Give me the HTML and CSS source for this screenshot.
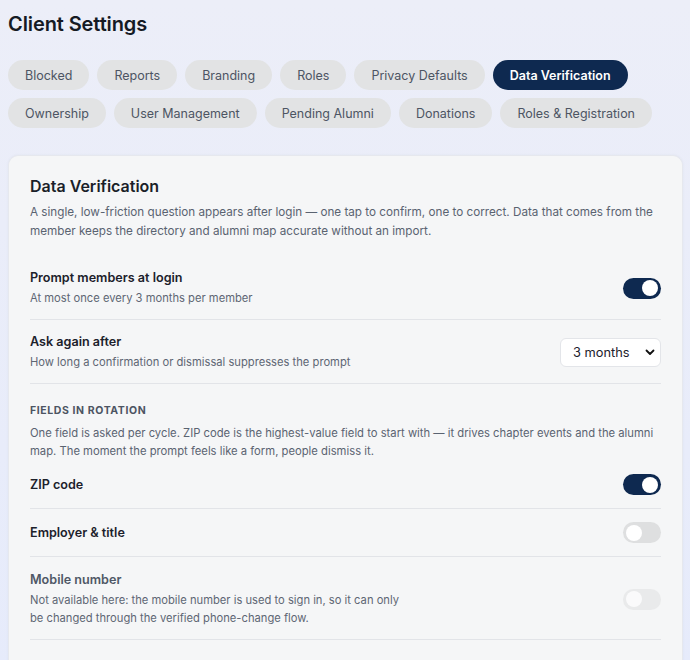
FILE: index.html
```html
<!DOCTYPE html>
<html lang="en">
<head>
<meta charset="utf-8">
<title>Client Settings</title>
<link rel="stylesheet" href="styles.css">
</head>
<body>
<div class="page">
  <h1 class="page-title">Client Settings</h1>
  <nav class="tabs">
    <span class="tab">Blocked</span>
    <span class="tab">Reports</span>
    <span class="tab">Branding</span>
    <span class="tab">Roles</span>
    <span class="tab">Privacy Defaults</span>
    <span class="tab active">Data Verification</span>
    <span class="tab">Ownership</span>
    <span class="tab">User Management</span>
    <span class="tab">Pending Alumni</span>
    <span class="tab">Donations</span>
    <span class="tab">Roles &amp; Registration</span>
  </nav>

  <section class="card">
    <h2 class="card-title">Data Verification</h2>
    <p class="card-desc">A single, low-friction question appears after login — one tap to confirm, one to correct. Data that comes from the member keeps the directory and alumni map accurate without an import.</p>

    <div class="rows">
      <div class="row">
        <div class="row-text">
          <div class="row-label">Prompt members at login</div>
          <div class="row-sub">At most once every 3 months per member</div>
        </div>
        <span class="toggle on"><span class="knob"></span></span>
      </div>
      <div class="row">
        <div class="row-text">
          <div class="row-label">Ask again after</div>
          <div class="row-sub">How long a confirmation or dismissal suppresses the prompt</div>
        </div>
        <div class="select">
          <span>3 months</span>
          <svg class="chev" width="10" height="7" viewBox="0 0 10 7"><path d="M1.5 1.5 L5 5 L8.5 1.5" fill="none" stroke="#111" stroke-width="1.8" stroke-linecap="round" stroke-linejoin="round"/></svg>
        </div>
      </div>
    </div>

    <div class="section">
      <div class="section-title">FIELDS IN ROTATION</div>
      <p class="section-desc">One field is asked per cycle. ZIP code is the highest-value field to start with — it drives chapter events and the alumni map. The moment the prompt feels like a form, people dismiss it.</p>
    </div>

    <div class="rows fields">
      <div class="row compact">
        <div class="row-text">
          <div class="row-label">ZIP code</div>
        </div>
        <span class="toggle on"><span class="knob"></span></span>
      </div>
      <div class="row compact">
        <div class="row-text">
          <div class="row-label">Employer &amp; title</div>
        </div>
        <span class="toggle"><span class="knob"></span></span>
      </div>
      <div class="row">
        <div class="row-text">
          <div class="row-label muted">Mobile number</div>
          <div class="row-sub narrow">Not available here: the mobile number is used to sign in, so it can only be changed through the verified phone-change flow.</div>
        </div>
        <span class="toggle disabled"><span class="knob"></span></span>
      </div>
    </div>
  </section>
</div>
</body>
</html>
```

FILE: styles.css
```css
* { box-sizing: border-box; }

html, body {
  margin: 0;
  padding: 0;
}

body {
  font-family: Inter, "Noto Sans", "Liberation Sans", sans-serif;
  background: linear-gradient(180deg, #eceef8 0%, #e6ebfb 100%);
  min-height: 660px;
  color: #1c212b;
}

.page {
  padding: 10px 7px 0 8px;
}

.page-title {
  margin: 0;
  font-size: 20px;
  font-weight: 600;
  line-height: 28px;
  color: #151a24;
  letter-spacing: -0.1px;
}

.tabs {
  display: flex;
  flex-wrap: wrap;
  gap: 8px 8px;
  margin-top: 22px;
  padding-right: 20px;
}

.tab {
  display: inline-flex;
  align-items: center;
  height: 30px;
  padding: 0 17px;
  border-radius: 15px;
  background: #e2e3e4;
  color: #4d5563;
  font-size: 12.5px;
  white-space: nowrap;
}

.tab.active {
  background: #0e2950;
  color: #fff;
  font-weight: 600;
}

.card {
  margin-top: 27px;
  background: #f5f6f7;
  border: 1px solid #e6e8ee;
  border-bottom: none;
  border-radius: 10px 10px 0 0;
  padding: 19px 21px 0 21px;
  box-shadow: 0 0 3px rgba(40, 50, 90, 0.05);
  min-height: 520px;
}

.card-title {
  margin: 0;
  font-size: 16px;
  font-weight: 600;
  line-height: 22px;
  color: #1a1f29;
}

.card-desc {
  margin: 6px 0 0 0;
  font-size: 11.7px;
  line-height: 19px;
  color: #5a6371;
}

.rows {
  margin-top: 15px;
}

.row {
  display: flex;
  align-items: center;
  justify-content: space-between;
  padding: 13px 0 12px 0;
  border-bottom: 1px solid #e2e4e8;
}

.row.compact {
  padding: 13px 0 13px 0;
}

.row.compact + .row:not(.compact) {
  padding-top: 14px;
}

.row-label {
  font-size: 12.6px;
  font-weight: 600;
  line-height: 18px;
  color: #1c212b;
}

.row-label.muted {
  color: #4f5866;
}

.row-sub {
  margin-top: 2px;
  font-size: 11.2px;
  line-height: 18px;
  color: #5e6674;
}

.row-sub.narrow {
  max-width: 380px;
}

.toggle {
  position: relative;
  flex: none;
  width: 38px;
  height: 21px;
  border-radius: 11px;
  background: #dedfe0;
}

.toggle .knob {
  position: absolute;
  top: 2.5px;
  left: 3px;
  width: 16px;
  height: 16px;
  border-radius: 50%;
  background: #fff;
}

.toggle.on {
  background: #0e2950;
}

.toggle.on .knob {
  left: 19px;
}

.toggle.disabled {
  opacity: 0.5;
}

.select {
  flex: none;
  display: flex;
  align-items: center;
  justify-content: space-between;
  width: 101px;
  height: 29px;
  padding: 0 5px 0 12px;
  background: #fff;
  border: 1px solid #e3e5e9;
  border-radius: 6px;
  font-size: 12.8px;
  color: #1c212b;
}

.chev {
  display: block;
}

.section {
  padding-top: 19px;
}

.section-title {
  font-size: 10.5px;
  font-weight: 700;
  letter-spacing: 0.6px;
  line-height: 16px;
  color: #4c5462;
}

.section-desc {
  margin: 5px 0 0 0;
  font-size: 11.25px;
  line-height: 18px;
  color: #5a6371;
}

.rows.fields {
  margin-top: 1px;
}
```
